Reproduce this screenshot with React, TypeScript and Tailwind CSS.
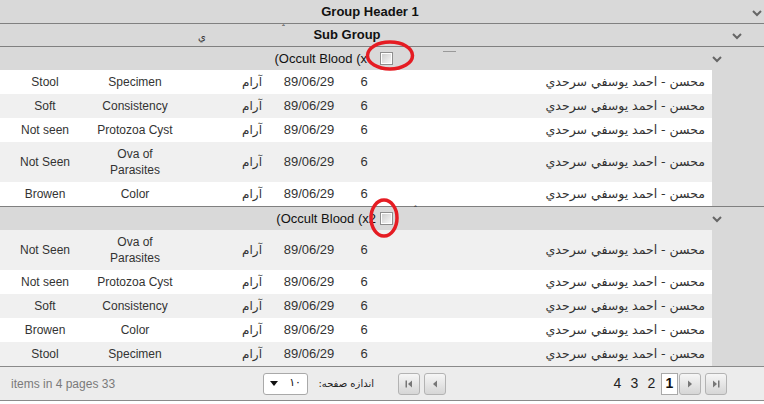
import React from 'react';

type Row = { value: string; test: string[]; tall?: boolean };

const group1: Row[] = [
  { value: 'Stool', test: ['Specimen'] },
  { value: 'Soft', test: ['Consistency'] },
  { value: 'Not seen', test: ['Protozoa Cyst'] },
  { value: 'Not Seen', test: ['Ova of', 'Parasites'], tall: true },
  { value: 'Browen', test: ['Color'] },
];

const group2: Row[] = [
  { value: 'Not Seen', test: ['Ova of', 'Parasites'], tall: true },
  { value: 'Not seen', test: ['Protozoa Cyst'] },
  { value: 'Soft', test: ['Consistency'] },
  { value: 'Browen', test: ['Color'] },
  { value: 'Stool', test: ['Specimen'] },
];

const Chevron = ({ className = '' }: { className?: string }) => (
  <svg width="10" height="7" viewBox="0 0 10 7" className={className}>
    <polyline points="1,1 5,5 9,1" fill="none" stroke="#666" strokeWidth="2" />
  </svg>
);

const Checkbox = () => (
  <div className="w-[13px] h-[13px] border border-[#8f8f8f] bg-white p-[1px]">
    <div className="w-full h-full bg-gradient-to-br from-[#cfcfcf] to-[#f7f7f7]" />
  </div>
);

const DataRow = ({ row, alt, tall }: { row: Row; alt: boolean; tall?: boolean }) => (
  <div className={`flex items-center ${tall ? 'h-[40px]' : 'h-[24px]'} ${alt ? 'bg-[#f0f0f0]' : 'bg-white'}`}>
    <div className="w-[90px] text-center">{row.value}</div>
    <div className="w-[90px] text-center leading-[16px]">
      {row.test.map((t) => (
        <div key={t}>{t}</div>
      ))}
    </div>
    <div className="w-[86px] text-right pr-[4px] font-['DejaVu_Sans',sans-serif] text-[12px]" dir="rtl">آرام</div>
    <div className="w-[86px] text-center text-[13px]">89/06/29</div>
    <div className="w-[24px] text-center text-[13px]">6</div>
    <div className="flex-1 text-right pr-[7px] font-['DejaVu_Sans',sans-serif] text-[12.5px]" dir="rtl">
      محسن - احمد يوسفي سرحدي
    </div>
  </div>
);

const PagerButton = ({ kind }: { kind: 'first' | 'prev' | 'next' | 'last' }) => (
  <div className="w-[22px] h-[22px] rounded-[3px] border border-[#b3b3b3] bg-gradient-to-b from-[#f6f6f6] to-[#d6d6d6] flex items-center justify-center">
    <svg width="10" height="10" viewBox="0 0 10 10">
      {kind === 'first' && (
        <>
          <rect x="1.5" y="1.5" width="1.5" height="7" fill="#777" />
          <polygon points="8,1.5 4,5 8,8.5" fill="#777" />
        </>
      )}
      {kind === 'prev' && <polygon points="7,1.5 3,5 7,8.5" fill="#777" />}
      {kind === 'next' && <polygon points="3,1.5 7,5 3,8.5" fill="#777" />}
      {kind === 'last' && (
        <>
          <polygon points="2,1.5 6,5 2,8.5" fill="#777" />
          <rect x="7" y="1.5" width="1.5" height="7" fill="#777" />
        </>
      )}
    </svg>
  </div>
);

export default function App() {
  return (
    <div className="relative w-[764px] h-[404px] overflow-hidden bg-white text-[12px] text-[#333] font-['Liberation_Sans','DejaVu_Sans',sans-serif]">
      {/* Group Header 1 */}
      <div className="flex items-center h-[24px] bg-[#d9d9d9] border-b border-[#808080]">
        <div className="flex-1 text-center font-bold text-[13px] text-[#111] pr-[12px]">Group Header 1</div>
        <Chevron className="mr-[2px] mt-[3px]" />
      </div>

      {/* Sub Group */}
      <div className="flex items-center h-[23px] bg-[#d9d9d9] border-b border-[#808080]">
        <div className="flex-1 text-center font-bold text-[13px] text-[#111] pr-[38px]">Sub Group</div>
        <Chevron className="mr-[22px] mt-[2px]" />
      </div>

      {/* Occult Blood 1 */}
      <div className="flex items-center h-[23px] bg-[#d9d9d9]">
        <div className="w-[393px] flex items-center justify-end gap-[13px]">
          <span className="text-[13px] text-[#111]">(Occult Blood (x</span>
          <Checkbox />
        </div>
        <div className="flex-1" />
        <Chevron className="mr-[42px] mt-[2px]" />
      </div>
      <div className="flex">
        <div className="w-[712px]">
          {group1.map((r, i) => (
            <DataRow key={i} row={r} alt={i % 2 === 1} tall={r.tall} />
          ))}
        </div>
        <div className="flex-1 bg-[#d9d9d9]" />
      </div>

      {/* Occult Blood 2 */}
      <div className="flex items-center h-[24px] bg-[#d9d9d9] border-t border-[#808080]">
        <div className="w-[393px] flex items-center justify-end gap-[4px]">
          <span className="text-[13px] text-[#111]">(Occult Blood (x2</span>
          <Checkbox />
        </div>
        <div className="flex-1" />
        <Chevron className="mr-[42px] mt-[2px]" />
      </div>
      <div className="flex">
        <div className="w-[712px]">
          {group2.map((r, i) => (
            <DataRow key={i} row={r} alt={i % 2 === 0} tall={r.tall} />
          ))}
        </div>
        <div className="flex-1 bg-[#d9d9d9]" />
      </div>

      {/* Footer / pager */}
      <div className="flex items-center h-[35px] bg-[#ececec] border-t border-b border-[#8a8a8a]">
        <span className="w-[263px] pl-[11px] text-[#7a7a7a]">items in 4 pages 33</span>
        <div className="w-[45px] h-[22px] rounded-[3px] border border-[#a9a9a9] bg-white flex items-center justify-between px-[6px]">
          <svg width="8" height="5" viewBox="0 0 8 5">
            <polygon points="0,0 8,0 4,5" fill="#111" />
          </svg>
          <span className="font-['DejaVu_Sans',sans-serif] text-[11px] text-[#111]">۱۰</span>
        </div>
        <span className="w-[62px] ml-[4px] whitespace-nowrap text-[10px] text-[#222] font-['DejaVu_Sans',sans-serif] text-right" dir="rtl">
          اندازه صفحه:
        </span>
        <div className="ml-[24px] flex items-center gap-[4px]">
          <PagerButton kind="first" />
          <PagerButton kind="prev" />
        </div>
        <div className="ml-[163px] flex items-center">
          <span className="w-[17px] text-center text-[14px] text-[#222]">4</span>
          <span className="w-[17px] text-center text-[14px] text-[#222]">3</span>
          <span className="w-[17px] text-center text-[14px] text-[#222]">2</span>
          <span className="ml-[1px] w-[17px] h-[22px] flex items-center justify-center border border-[#a9a9a9] bg-white text-[14px] text-[#111] font-bold">
            1
          </span>
          <div className="ml-[1px]">
            <PagerButton kind="next" />
          </div>
          <div className="ml-[4px]">
            <PagerButton kind="last" />
          </div>
        </div>
      </div>

      {/* stray marks in the headers */}
      <span className="absolute left-[198px] top-[29px] text-[10px] text-[#333] font-['DejaVu_Sans',sans-serif]">ي</span>
      <span className="absolute left-[443px] top-[51px] w-[13px] h-[1px] bg-[#999]" />
      <span className="absolute left-[282px] top-[22px] text-[9px] text-[#333]">ˆ</span>
      <span className="absolute left-[414px] top-[203px] text-[9px] text-[#333]">ˆ</span>

      {/* red annotation ellipses */}
      <svg className="absolute inset-0 pointer-events-none" width="764" height="404">
        <ellipse cx="390" cy="55.5" rx="22.5" ry="13.5" fill="none" stroke="#e51c23" strokeWidth="3.5" />
        <ellipse cx="384" cy="218" rx="13" ry="18" fill="none" stroke="#e51c23" strokeWidth="3.5" />
      </svg>
    </div>
  );
}
